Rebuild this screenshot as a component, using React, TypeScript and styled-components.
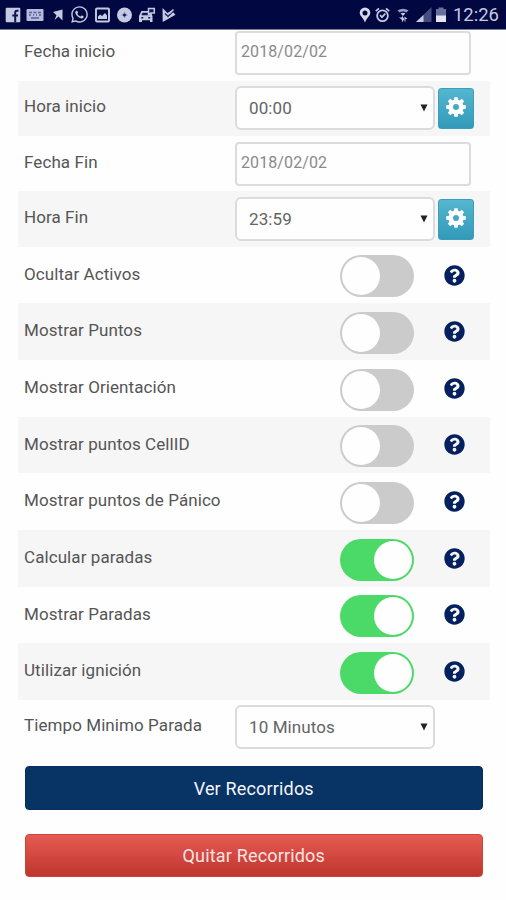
import React, { useState } from "react";
import styled, { createGlobalStyle } from "styled-components";
import { FaQuestionCircle, FaWhatsapp } from "react-icons/fa";

const GlobalStyle = createGlobalStyle`
  * { box-sizing: border-box; }
  body { margin: 0; background: #fefefe; font-family: Roboto, "Liberation Sans", sans-serif; }
  button, input, select { font-family: inherit; }
`;

const Screen = styled.div`
  width: 506px;
  height: 900px;
  overflow: hidden;
  display: flex;
  flex-direction: column;
  background: #fefefe;
`;

const StatusBar = styled.header`
  flex: none;
  height: 30px;
  display: flex;
  justify-content: space-between;
  align-items: center;
  padding: 0 7px 0 2px;
  background: #010741;
  border-bottom: 1px solid #777b9b;
  color: #c5cae2;
`;

const Notifications = styled.div`
  display: grid;
  grid-template-columns: repeat(8, 22.25px);
  align-items: center;
  justify-items: center;
  svg { display: block; }
`;

const Indicators = styled.div`
  display: flex;
  align-items: center;
  gap: 3.7px;
  svg { display: block; flex: none; }
`;

const Clock = styled.span`
  font-size: 18.5px;
  line-height: 28px;
  margin-left: 2px;
`;

const Viewport = styled.main`
  flex: 1;
  min-height: 0;
  overflow: hidden;
  padding: 0 16px 0 18px;
`;

const Rows = styled.div`
  margin-top: -4.5px;
`;

const Row = styled.div<{ $shaded: boolean; $height: number }>`
  height: ${(p) => p.$height}px;
  display: grid;
  grid-template-columns: 217px 1fr;
  align-items: center;
  background: ${(p) => (p.$shaded ? "#f6f6f6" : "transparent")};
`;

const Label = styled.label<{ $toggle: boolean }>`
  padding-left: 6px;
  padding-bottom: ${(p) => (p.$toggle ? 2.4 : 4)}px;
  font-size: 17px;
  line-height: 22px;
  letter-spacing: 0.08px;
  white-space: nowrap;
  color: #555;
`;

const Control = styled.div<{ $toggle?: boolean }>`
  display: flex;
  align-items: center;
  gap: ${(p) => (p.$toggle ? 30 : 3)}px;
  padding-left: ${(p) => (p.$toggle ? 105 : 0)}px;
`;

const DateInput = styled.input`
  width: 236px;
  height: 44px;
  padding: 0 6px 3px 4px;
  border: 2px solid #dcdcdc;
  border-radius: 4px;
  background: #fefefe;
  color: #8a8a8a;
  font-size: 16px;
  letter-spacing: 0.1px;
  outline: none;
`;

const SelectBox = styled.button`
  width: 200px;
  height: 44px;
  display: flex;
  justify-content: space-between;
  align-items: center;
  padding: 0 5.5px 0 12px;
  border: 2px solid #dbdbdb;
  border-radius: 6px;
  background: #fefefe;
  color: #646464;
  font-size: 17px;
  letter-spacing: 0.1px;
`;

const GearButton = styled.button`
  width: 36px;
  height: 41px;
  display: flex;
  align-items: center;
  justify-content: center;
  padding: 0 0 3px;
  border: 1px solid #3b9fbc;
  border-radius: 3px;
  background: linear-gradient(#55b6d0, #329ab9);
  color: #fff;
`;

const Switch = styled.button<{ $on: boolean }>`
  width: 74px;
  height: 42px;
  margin-top: 2.6px;
  padding: 2px;
  display: flex;
  justify-content: ${(p) => (p.$on ? "flex-end" : "flex-start")};
  border: 0;
  border-radius: 21px;
  background: ${(p) => (p.$on ? "#4bd967" : "#cbcbcb")};
`;

const Knob = styled.span`
  width: 38px;
  height: 38px;
  border-radius: 50%;
  background: #fefefe;
`;

const Help = styled.span`
  display: flex;
  color: #05205f;
`;

const Actions = styled.div`
  display: flex;
  flex-direction: column;
  gap: 24px;
  padding: 11.3px 7.5px 0 7px;
`;

const ActionButton = styled.button<{ $danger?: boolean }>`
  height: 43.5px;
  padding: 0;
  border: 1px solid ${(p) => (p.$danger ? "#c9443d" : "#062c60")};
  border-radius: 4px;
  background: ${(p) => (p.$danger ? "linear-gradient(#e65a54, #bf362e)" : "#083365")};
  color: ${(p) => (p.$danger ? "#fbe5e2" : "#f3f6fa")};
  font-size: 18px;
  letter-spacing: 0.17px;
`;

const Caret = () => (
  <svg width="8" height="8" viewBox="0 0 8 8">
    <path d="M0.5 0.5H7.5L4 7.5Z" fill="#222" />
  </svg>
);

const Gear = () => (
  <svg width="20" height="20" viewBox="0 0 20 20">
    <circle cx="10" cy="10" r="5.3" fill="none" stroke="#fff" strokeWidth="4.6" />
    {[0, 45, 90, 135, 180, 225, 270, 315].map((angle) => (
      <path key={angle} d="M7.8 3.6L8.3 0.2H11.7L12.2 3.6Z" fill="#fff" transform={`rotate(${angle} 10 10)`} />
    ))}
  </svg>
);

const LeftIcons = () => (
  <Notifications>
    <svg width="16" height="16" viewBox="0 0 16 16">
      <rect x="0.7" y="0.7" width="14.6" height="14.6" rx="1" fill="#c5cae2" />
      <path d="M13.5 3.8h-1.6q-1.7 0-1.7 1.8V15.3M7.3 8.6H13" stroke="#101750" strokeWidth="2" fill="none" />
    </svg>
    <svg width="18" height="14" viewBox="0 0 18 14">
      <rect x="0.5" y="1" width="17" height="12" rx="1" fill="#b4bbdc" />
      <path d="M3 4.5h3M7.5 4.5h3M12 4.5h3M3 7h2M7 7h1M10 7h1M13 7h2M5 10h8" stroke="#59619a" strokeWidth="1.4" />
    </svg>
    <svg width="18" height="16" viewBox="0 0 18 16">
      <path d="M4 5L13.5 2.5V13.5L9.5 9.5L5.5 13L7.5 8.3Z" fill="#c5cae2" />
    </svg>
    <FaWhatsapp size={19} />
    <svg width="17" height="16" viewBox="0 0 17 16">
      <rect x="2" y="1.5" width="13" height="13" rx="1" fill="none" stroke="#c5cae2" strokeWidth="1.9" />
      <path d="M4 12V9.5L6.2 7.5L8 9L11 6L13 8.5V12Z" fill="#c5cae2" />
    </svg>
    <svg width="17" height="16" viewBox="0 0 17 16">
      <circle cx="8.5" cy="8" r="7.5" fill="#c5cae2" />
      <path d="M8.5 5V11M5.5 8H11.5" stroke="#8f96bd" strokeWidth="1.4" />
      <circle cx="8.5" cy="8" r="1.5" fill="#101750" />
    </svg>
    <svg width="18" height="16" viewBox="0 0 18 16">
      <path d="M1 9L3.4 4H12.5L14.5 9V15H12V13.2H4V15H1Z" fill="#c5cae2" />
      <path d="M4.5 5.7H10.7L11.8 8.3H3.4Z" fill="#101750" />
      <path d="M3.3 10.7H5.3M10.2 10.7H12.2" stroke="#101750" strokeWidth="1.6" />
      <path d="M10.5 1.5H16.3V6H12.8L10.5 7.5Z" fill="#101750" stroke="#c5cae2" strokeWidth="1.5" />
    </svg>
    <svg width="16" height="16" viewBox="0 0 16 16">
      <path d="M1.5 1L6.5 6L10.5 3.5L14.5 7.8L1.7 15Z" fill="#c5cae2" />
      <path d="M4 6.5L7 9.5L13 3.5" stroke="#101750" strokeWidth="1.2" fill="none" />
      <path d="M8.5 6.5L12.5 2.5" stroke="#c5cae2" strokeWidth="1.4" />
    </svg>
  </Notifications>
);

const RightIcons = () => (
  <Indicators>
    <svg width="12" height="16" viewBox="0 0 12 16">
      <path fillRule="evenodd" d="M6 0.5A5.3 5.3 0 0 0 .7 5.8C.7 9 4.5 11 6 15.5C7.5 11 11.3 9 11.3 5.8A5.3 5.3 0 0 0 6 .5ZM6 3.5A2.5 2.5 0 1 1 6 8.5A2.5 2.5 0 0 1 6 3.5Z" fill="#d5d9e9" />
    </svg>
    <svg width="15" height="16" viewBox="0 0 15 16">
      <circle cx="7.5" cy="8.8" r="5.4" fill="none" stroke="#c5cae2" strokeWidth="1.8" />
      <path d="M.8 4.2L4 1.3M11 1.3L14.2 4.2M5 8.2L7 10.2L10.3 6.7" stroke="#c5cae2" strokeWidth="1.7" fill="none" />
    </svg>
    <svg width="18" height="16" viewBox="0 0 18 16">
      <path d="M3.5 3.3Q9 0 14.5 3.3L12.5 5.5Q9 3.5 5.5 5.5Z" fill="#949cc3" />
      <path d="M6.5 6.3Q9 5 11.5 6.3L9 9ZM5 10.5H8V8.5L10.3 12L8 15.5V13ZM10.5 9.5L13.5 12H11.5V14.5H10.5Z" fill="#c5cae2" />
    </svg>
    <svg width="16" height="16" viewBox="0 0 16 16">
      <path d="M0 15L15.5 0V15Z" fill="#454d80" />
      <path d="M0 15L7.5 8V15Z" fill="#c5cae2" />
    </svg>
    <svg width="12" height="16" viewBox="0 0 12 16">
      <path d="M1 2H3.5V.5H8.5V2H11V15H1Z" fill="#66709a" />
      <path d="M1 8.5H11V15H1Z" fill="#e2e5ef" />
    </svg>
    <Clock>12:26</Clock>
  </Indicators>
);

type Field =
  | { kind: "date"; label: string; value: string }
  | { kind: "select"; label: string; value: string; gear?: boolean }
  | { kind: "toggle"; label: string; on: boolean };

const fields: Field[] = [
  { kind: "date", label: "Fecha inicio", value: "2018/02/02" },
  { kind: "select", label: "Hora inicio", value: "00:00", gear: true },
  { kind: "date", label: "Fecha Fin", value: "2018/02/02" },
  { kind: "select", label: "Hora Fin", value: "23:59", gear: true },
  { kind: "toggle", label: "Ocultar Activos", on: false },
  { kind: "toggle", label: "Mostrar Puntos", on: false },
  { kind: "toggle", label: "Mostrar Orientación", on: false },
  { kind: "toggle", label: "Mostrar puntos CellID", on: false },
  { kind: "toggle", label: "Mostrar puntos de Pánico", on: false },
  { kind: "toggle", label: "Calcular paradas", on: true },
  { kind: "toggle", label: "Mostrar Paradas", on: true },
  { kind: "toggle", label: "Utilizar ignición", on: true },
  { kind: "select", label: "Tiempo Minimo Parada", value: "10 Minutos" },
];

const ToggleControl = ({ initial, label }: { initial: boolean; label: string }) => {
  const [on, setOn] = useState(initial);
  return (
    <Control $toggle>
      <Switch $on={on} role="switch" aria-checked={on} aria-label={label} onClick={() => setOn(!on)}>
        <Knob />
      </Switch>
      <Help><FaQuestionCircle size={21} /></Help>
    </Control>
  );
};

const FieldControl = ({ field }: { field: Field }) => {
  if (field.kind === "toggle") return <ToggleControl initial={field.on} label={field.label} />;
  if (field.kind === "date") return <Control><DateInput defaultValue={field.value} /></Control>;
  return (
    <Control>
      <SelectBox>{field.value}<Caret /></SelectBox>
      {field.gear && <GearButton aria-label="Ajustes"><Gear /></GearButton>}
    </Control>
  );
};

export default function App() {
  return (
    <Screen>
      <GlobalStyle />
      <StatusBar>
        <LeftIcons />
        <RightIcons />
      </StatusBar>
      <Viewport>
        <Rows>
          {fields.map((field, i) => (
            <Row key={field.label} $shaded={i % 2 === 1} $height={field.kind === "toggle" ? 56.65 : 55.3}>
              <Label $toggle={field.kind === "toggle"}>{field.label}</Label>
              <FieldControl field={field} />
            </Row>
          ))}
        </Rows>
        <Actions>
          <ActionButton>Ver Recorridos</ActionButton>
          <ActionButton $danger>Quitar Recorridos</ActionButton>
        </Actions>
      </Viewport>
    </Screen>
  );
}
